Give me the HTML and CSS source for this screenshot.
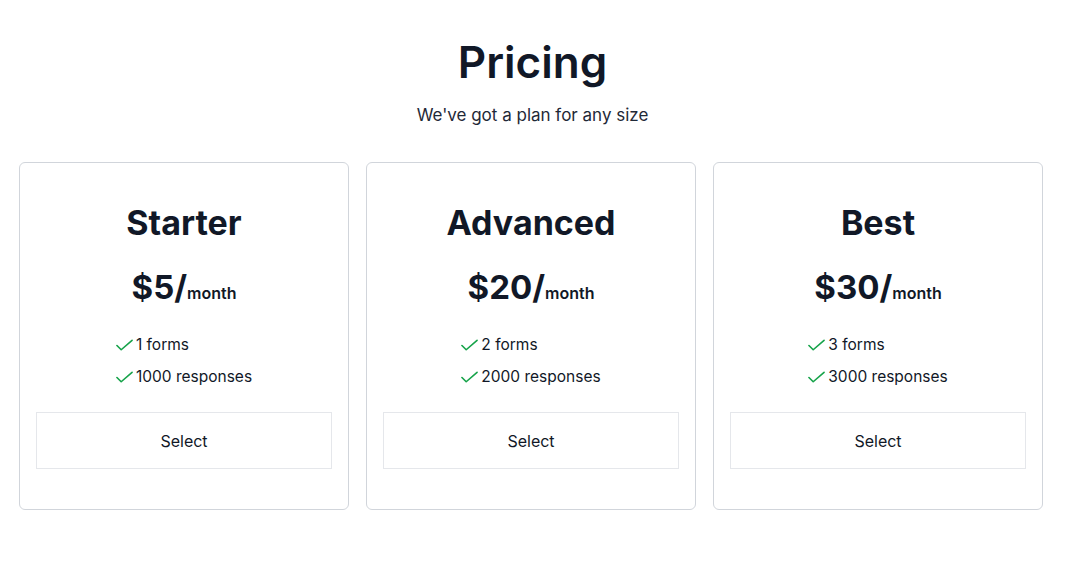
FILE: index.html
```html
<!DOCTYPE html>
<html lang="en">
<head>
    <meta charset="UTF-8">
    <meta name="viewport" content="width=device-width, initial-scale=1.0">
    <title>Pricing</title>
    <link rel="stylesheet" href="styles.css">
</head>
<body>
    <div class="header">
        <h1>Pricing</h1>
        <p>We've got a plan for any size</p>
    </div>
    <div class="plans">
        <div class="plan">
            <h2>Starter</h2>
            <div class="price">$5/<span>month</span></div>
            <ul class="features">
                <li><svg viewBox="0 0 18 13"><path d="M1 6.5l4.5 4.5L17 1"/></svg>1 forms</li>
                <li><svg viewBox="0 0 18 13"><path d="M1 6.5l4.5 4.5L17 1"/></svg>1000 responses</li>
            </ul>
            <button class="select">Select</button>
        </div>
        <div class="plan">
            <h2>Advanced</h2>
            <div class="price">$20/<span>month</span></div>
            <ul class="features">
                <li><svg viewBox="0 0 18 13"><path d="M1 6.5l4.5 4.5L17 1"/></svg>2 forms</li>
                <li><svg viewBox="0 0 18 13"><path d="M1 6.5l4.5 4.5L17 1"/></svg>2000 responses</li>
            </ul>
            <button class="select">Select</button>
        </div>
        <div class="plan">
            <h2>Best</h2>
            <div class="price">$30/<span>month</span></div>
            <ul class="features">
                <li><svg viewBox="0 0 18 13"><path d="M1 6.5l4.5 4.5L17 1"/></svg>3 forms</li>
                <li><svg viewBox="0 0 18 13"><path d="M1 6.5l4.5 4.5L17 1"/></svg>3000 responses</li>
            </ul>
            <button class="select">Select</button>
        </div>
    </div>
</body>
</html>
```

FILE: styles.css
```css
*{
    margin: 0;
    padding: 0;
    box-sizing: border-box;
}
body{
    font-family: Inter, "Liberation Sans", sans-serif;
    color: #111827;
    background: #fff;
}
ul,li{
    list-style: none;
}
.header{
    text-align: center;
    padding-top: 36px;
}
.header h1{
    font-size: 44px;
    line-height: 52px;
    font-weight: 600;
}
.header p{
    margin-top: 14px;
    font-size: 17px;
    line-height: 26px;
    color: #1f2937;
}
.plans{
    display: grid;
    grid-template-columns: repeat(3, 1fr);
    gap: 17px;
    width: 1043px;
    padding-left: 19px;
    margin-top: 34px;
}
.plan{
    border: 1px solid #d1d5db;
    border-radius: 6px;
    padding: 40px 16px;
    display: flex;
    flex-direction: column;
    align-items: center;
}
.plan h2{
    font-size: 34px;
    line-height: 40px;
    font-weight: 700;
}
.price{
    margin-top: 24px;
    font-size: 33px;
    line-height: 40px;
    font-weight: 700;
}
.price span{
    font-size: 16px;
    font-weight: 600;
}
.features{
    margin-top: 20px;
}
.features li{
    display: flex;
    align-items: center;
    font-size: 15.5px;
    line-height: 24px;
    margin-bottom: 8px;
}
.features svg{
    width: 17px;
    height: 13px;
    margin-right: 3px;
    fill: none;
    stroke: #16a34a;
    stroke-width: 1.7;
    stroke-linecap: round;
    stroke-linejoin: round;
}
.select{
    margin-top: 15px;
    width: 100%;
    height: 57px;
    background: #fff;
    border: 1px solid #e5e7eb;
    font-family: inherit;
    font-size: 16px;
    color: #111827;
}
```
